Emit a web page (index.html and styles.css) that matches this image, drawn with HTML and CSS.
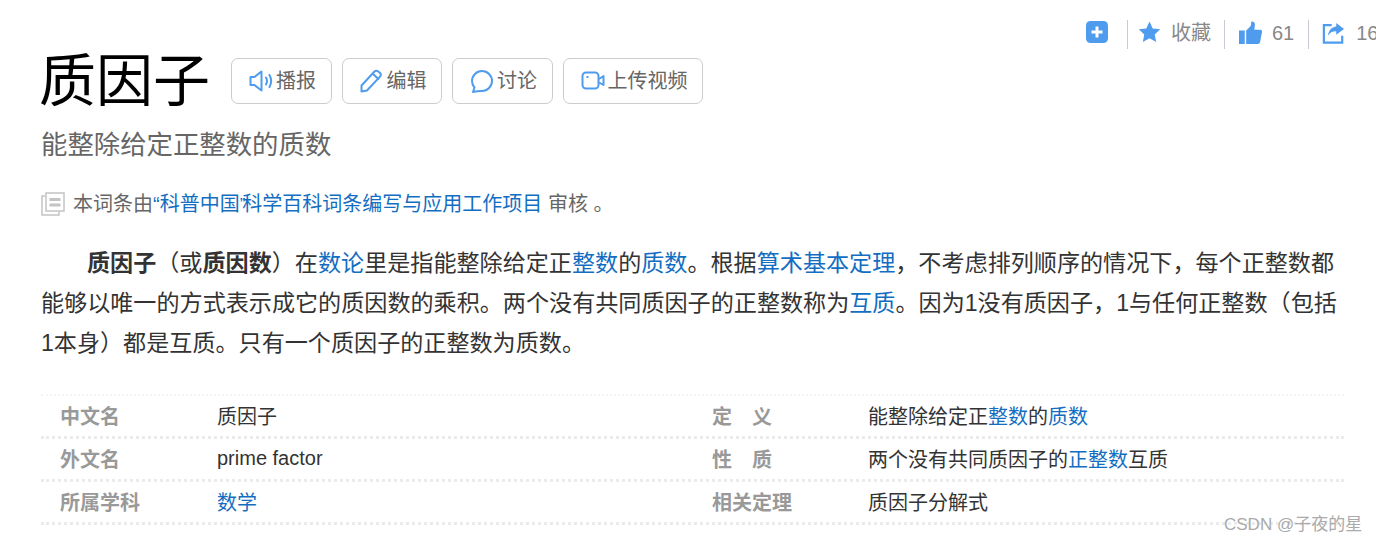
FILE: index.html
```html
<!DOCTYPE html>
<html lang="zh-CN">
<head>
<meta charset="utf-8">
<title>质因子</title>
<link rel="stylesheet" href="styles.css">
</head>
<body>
<div class="page">
  <div class="share">
    <svg class="ico-add" viewBox="0 0 22 22"><rect width="22" height="22" rx="4.500" fill="#4f9cee"/><path d="M11 5.500v11M5.500 11h11" stroke="#fff" stroke-width="3"/></svg>
    <span class="sep sep-a"></span>
    <svg class="ico-star" viewBox="0 0 24 24"><path d="M12 .5l3.500 7.600 8.200 1-6 5.600 1.600 8.100L12 18.800 4.700 22.800l1.600-8.100-6-5.600 8.200-1z" fill="#4f9cee"/></svg>
    <span class="share-text">收藏</span>
    <span class="sep sep-b"></span>
    <svg class="ico-thumb" viewBox="0 0 24 24"><path d="M0 10h6v14H0zM7.500 10l4.500-4.500c.6-1.500.5-3.500 1-5 2.300-.3 3.800 1 3.600 3.500L16 9h6c1.500 0 2.300 1.200 2 2.500l-2 10.500c-.3 1-1 2-2 2H7.500z" fill="#4f9cee"/></svg>
    <span class="share-text">61</span>
    <span class="sep sep-c"></span>
    <svg class="ico-share" viewBox="0 0 24 24"><path d="M10 3.500H1.500v19h20V15" fill="none" stroke="#4f9cee" stroke-width="2.400"/><path d="M15 1l8.500 6.500-8.500 6.500v-4c-4.500 0-7 1.500-9 5 .5-5.500 4-9.500 9-10z" fill="#4f9cee"/></svg>
    <span class="share-text">16</span>
  </div>
  <div class="title-row">
    <h1 class="title">质因子</h1>
    <a class="btn"><svg class="btn-ico" viewBox="0 0 24 24"><path d="M1.500 8h4l7-5.500v19l-7-5.500h-4z" fill="none" stroke="#4f9cee" stroke-width="2" stroke-linejoin="round"/><path d="M17 8.500c1.300 2.300 1.300 4.700 0 7M20.500 6c2.200 4 2.200 8 0 12" fill="none" stroke="#4f9cee" stroke-width="2" stroke-linecap="round"/></svg><span class="btn-text">播报</span></a>
    <a class="btn"><svg class="btn-ico" viewBox="0 0 24 24"><path d="M1.500 16.500L14.500 2.500c1-1 2.500-1 3.800 0L20 4c1 1 1 2.500 0 3.600L7 21.500l-5.500 1z" fill="none" stroke="#4f9cee" stroke-width="2" stroke-linejoin="round"/><path d="M13 5l6 5.500" stroke="#4f9cee" stroke-width="2"/></svg><span class="btn-text">编辑</span></a>
    <a class="btn"><svg class="btn-ico" viewBox="0 0 24 24"><path d="M4.500 18.500C2.800 16.500 2 14.500 2 12 2 6.500 6.500 2 12 2s10 4.500 10 10-4.500 10-10 10c-2 0-4-.1-9 1z" fill="none" stroke="#4f9cee" stroke-width="2" stroke-linejoin="round"/></svg><span class="btn-text">讨论</span></a>
    <a class="btn"><svg class="btn-ico" viewBox="0 0 24 24"><rect x="1.500" y="3.500" width="16" height="16" rx="3.500" fill="none" stroke="#4f9cee" stroke-width="2"/><path d="M18 10l4.500-3v9L18 13.500" fill="none" stroke="#4f9cee" stroke-width="2" stroke-linejoin="round"/><path d="M5.500 8h2" stroke="#4f9cee" stroke-width="2"/></svg><span class="btn-text">上传视频</span></a>
  </div>
  <div class="subtitle">能整除给定正整数的质数</div>
  <div class="review">
    <svg class="ico-doc" viewBox="0 0 24 24"><path d="M4 4H1v19h17v-3" fill="none" stroke="#c4c4c4" stroke-width="1.500"/><rect x="5" y="1" width="18" height="18" fill="#fff" stroke="#c4c4c4" stroke-width="1.500"/><path d="M8.500 7.500h11M8.500 13h11" stroke="#c4c4c4" stroke-width="3"/></svg>
    <span>本词条由<a class="link">“科普中国<span class="tight">”</span>科学百科词条编写与应用工作项目</a> 审核 。</span>
  </div>
  <p class="para"><b>质因子</b>（或<b>质因数</b>）在<a class="link">数论</a>里是指能整除给定正<a class="link">整数</a>的<a class="link">质数</a>。根据<a class="link">算术基本定理</a>，不考虑排列顺序的情况下，每个正整数都能够以唯一的方式表示成它的质因数的乘积。两个没有共同质因子的正整数称为<a class="link">互质</a>。因为1没有质因子，1与任何正整数（包括1本身）都是互质。只有一个质因子的正整数为质数。</p>
  <div class="info">
    <div class="row">
      <div class="cell"><span class="key">中文名</span><span class="val">质因子</span></div>
      <div class="cell"><span class="key">定　义</span><span class="val">能整除给定正<a class="link">整数</a>的<a class="link">质数</a></span></div>
    </div>
    <div class="row">
      <div class="cell"><span class="key">外文名</span><span class="val">prime factor</span></div>
      <div class="cell"><span class="key">性　质</span><span class="val">两个没有共同质因子的<a class="link">正整数</a>互质</span></div>
    </div>
    <div class="row">
      <div class="cell"><span class="key">所属学科</span><span class="val"><a class="link">数学</a></span></div>
      <div class="cell"><span class="key">相关定理</span><span class="val">质因子分解式</span></div>
    </div>
  </div>
</div>
<div class="watermark">CSDN @子夜的星</div>
</body>
</html>
```
FILE: styles.css
```css
* { box-sizing: border-box; }
html, body { margin: 0; height: 542px; overflow: hidden; background: #fff; }
body {
  font-family: "Liberation Sans", "Noto Sans CJK SC", sans-serif;
  color: #333;
  font-size: 20px;
  position: relative;
}
.page { padding: 20px 33px 0 41px; width: 1376px; }
.link { color: #136ec2; }
.tight { font-size: 17px; letter-spacing: -3px; vertical-align: 1px; }
.share {
  display: flex;
  align-items: center;
  height: 29px;
  padding-left: 1045px;
  margin-right: -40px;
  white-space: nowrap;
}
.share-text { color: #888; font-size: 20px; line-height: 29px; margin-top: -2px; }
.sep { flex: none; width: 1px; height: 29px; background: #c8ccd2; }
.sep-a { margin: 0 10px 0 19px; }
.sep-b { margin: 0 14px 0 13px; }
.sep-c { margin: 0 13px 0 14px; }
.ico-add { flex: none; width: 22px; height: 22px; margin-top: -5px; }
.ico-star { flex: none; width: 23px; height: 22px; margin-right: 10px; margin-top: -5px; }
.ico-thumb { flex: none; width: 23px; height: 23px; margin-right: 10px; margin-top: -4px; }
.ico-share { flex: none; width: 23px; height: 22px; margin-right: 11px; margin-top: -3px; }
.title-row { display: flex; align-items: center; margin-top: 1px; height: 62px; gap: 10px; }
.title { margin: 0 11px 0 -2px; font-size: 57px; font-weight: 400; color: #000; line-height: 62px; white-space: nowrap; }
.btn {
  display: flex;
  align-items: center;
  height: 46px;
  padding: 0 14.500px 0 17px;
  border: 1px solid #ccc;
  border-radius: 7px;
  color: #666;
  font-size: 20px;
  white-space: nowrap;
}
.btn-ico { flex: none; width: 24px; height: 24px; margin-right: 3px; }
.btn-text { margin-bottom: 3px; }
.subtitle { font-size: 26.4px; line-height: 36px; color: #666; margin-top: 15px; }
.review { display: flex; align-items: center; margin-top: 24px; height: 30px; color: #666; }
.ico-doc { flex: none; width: 24px; height: 24px; margin-right: 8px; margin-top: 3px; }
.para {
  margin: 26px 0 0;
  font-size: 23.1px;
  line-height: 40px;
  text-indent: 46px;
  color: #333;
}
.info {
  margin-top: 31px;
  width: 1303px;
  border-top: 2px dotted #f4f4f4;
}
.row { display: flex; height: 43px; border-bottom: 3px dotted #ebebeb; }
.cell { flex: none; width: 652px; display: flex; align-items: center; padding-bottom: 2px; }
.cell + .cell .val { margin-left: -1px; }
.key { flex: none; width: 176px; padding-left: 19px; font-weight: 700; color: #999; white-space: nowrap; }
.val { color: #333; }
.watermark { position: absolute; left: 1224px; top: 513px; font-size: 17px; line-height: 24px; color: #aaa; white-space: nowrap; }
```
